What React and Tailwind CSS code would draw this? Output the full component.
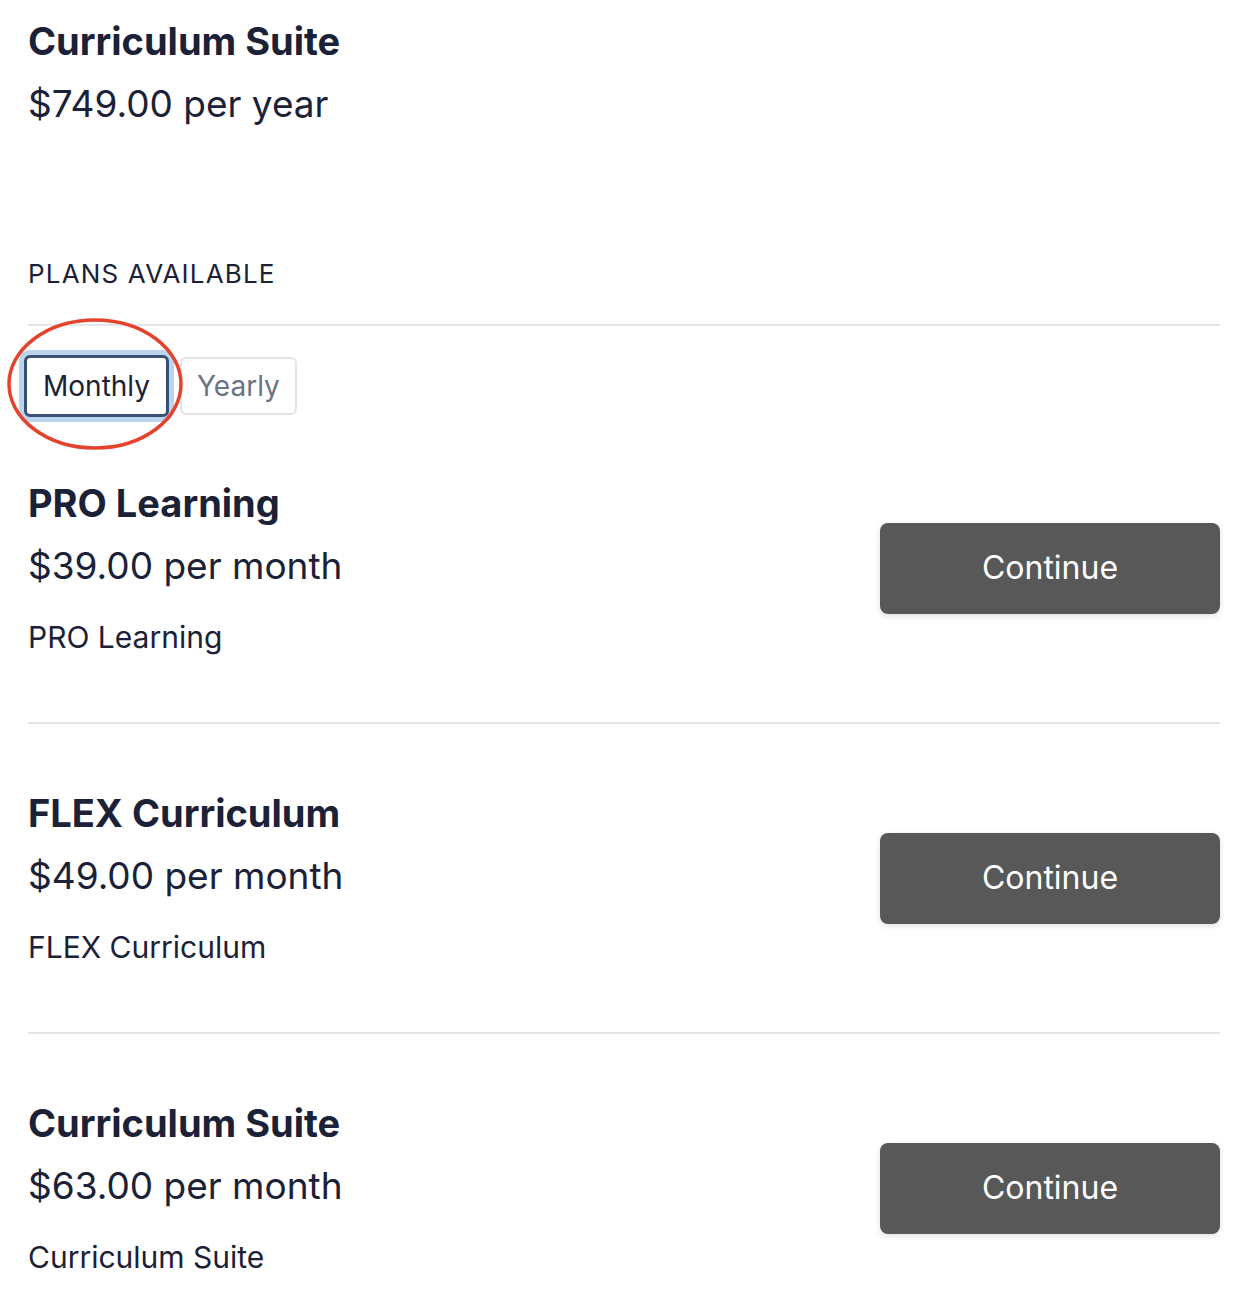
const plans = [
  { name: 'PRO Learning', price: '$39.00 per month', desc: 'PRO Learning' },
  { name: 'FLEX Curriculum', price: '$49.00 per month', desc: 'FLEX Curriculum' },
  { name: 'Curriculum Suite', price: '$63.00 per month', desc: 'Curriculum Suite' },
];

function PlanRow({ plan, first, last }) {
  return (
    <div
      className={`flex items-center justify-between ${first ? 'pt-[64px]' : 'pt-[67px]'} ${
        last ? 'pb-[34px]' : 'pb-[69px] border-b-2 border-[#e3e7eb]'
      }`}
    >
      <div>
        <h3 className="text-[38px] leading-[44px] font-bold text-[#1b2136]">{plan.name}</h3>
        <p className="mt-[19px] text-[37px] leading-[44px] text-[#1b2136]">{plan.price}</p>
        <p className="mt-[33px] text-[30px] leading-[32px] text-[#1b2136]">{plan.desc}</p>
      </div>
      <button
        type="button"
        className="mt-[2px] w-[340px] h-[91px] rounded-lg bg-[#575857] text-white text-[32px] shadow-[0_2px_6px_rgba(0,0,0,0.12)]"
      >
        Continue
      </button>
    </div>
  );
}

export default function App() {
  return (
    <div className="bg-white min-h-[1310px] pl-[28px] pr-[38px] font-['Inter','Liberation_Sans',sans-serif]">
      <h1 className="pt-[19px] text-[38px] leading-[44px] font-bold text-[#1b2136]">Curriculum Suite</h1>
      <p className="mt-[19px] text-[37px] leading-[44px] text-[#1b2136]">$749.00 per year</p>

      <h2 className="mt-[132px] text-[26px] leading-[32px] tracking-[0.045em] uppercase text-[#1b2136]">Plans available</h2>
      <div className="mt-[34px] border-t-2 border-[#e3e7eb]" />

      <div className="relative mt-[29px] flex items-center gap-[11px]">
        <button
          type="button"
          className="h-[62px] px-[16px] -ml-[4px] rounded-md border-[3px] border-[#3a5073] bg-white text-[28px] text-[#1b2136] shadow-[0_0_0_5px_#bcd5ee]"
        >
          Monthly
        </button>
        <button
          type="button"
          className="h-[58px] px-[15px] rounded-md border-2 border-[#e3e5e8] bg-white text-[28px] text-[#6b7285]"
        >
          Yearly
        </button>
        <svg
          className="absolute pointer-events-none"
          style={{ left: -22, top: -38 }}
          width="180"
          height="136"
          viewBox="0 0 180 136"
          aria-hidden
        >
          <ellipse cx="89" cy="67" rx="86" ry="64" fill="none" stroke="#e4432d" strokeWidth="3.5" />
        </svg>
      </div>

      {plans.map((p, i) => (
        <PlanRow key={p.name} plan={p} first={i === 0} last={i === plans.length - 1} />
      ))}
    </div>
  );
}
